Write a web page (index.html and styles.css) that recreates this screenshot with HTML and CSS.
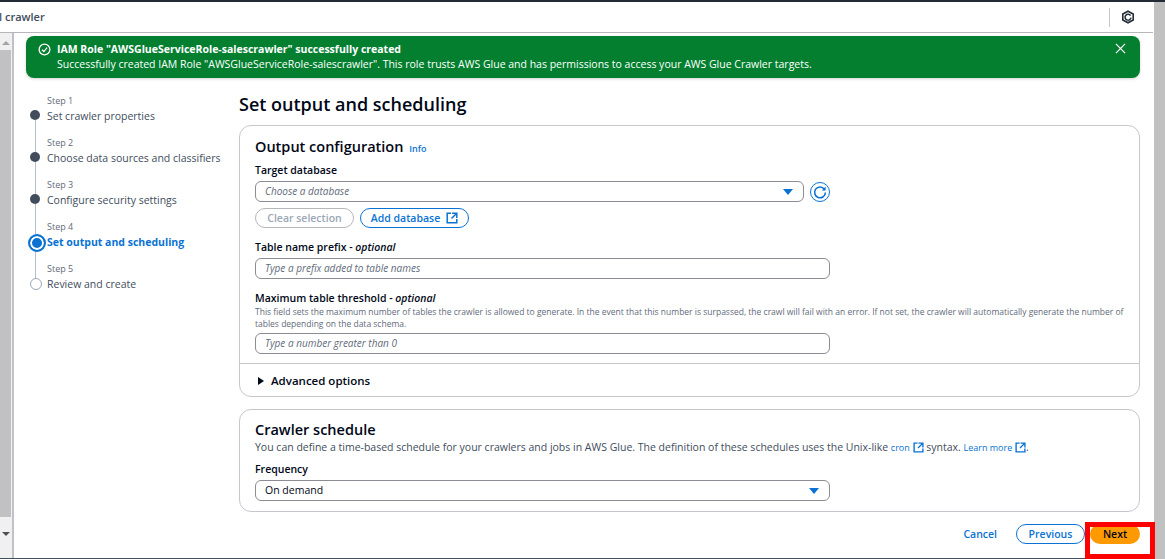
FILE: index.html
```html
<!DOCTYPE html>
<html lang="en">
<head>
<meta charset="utf-8">
<title>Add crawler</title>
<link rel="stylesheet" href="styles.css">
</head>
<body>
<div class="page">
  <header class="topbar">
    <span class="crumb">l crawler</span>
    <span class="top-right">
      <svg class="hex" viewBox="0 0 14 14" width="14" height="14"><path d="M7 1.2 12.2 4v6L7 12.8 1.8 10V4Z" fill="none" stroke="#232b37" stroke-width="1.6"/><path d="M9.6 5.6A3 3 0 1 0 10 7.6" fill="none" stroke="#232b37" stroke-width="1.5"/></svg>
    </span>
  </header>
  <div class="body-row">
    <div class="scroll-left"><span class="arrow-up"></span><span class="thumb"></span><span class="arrow-down"></span></div>
    <main class="content">
      <div class="flash">
        <svg class="flash-icon" viewBox="0 0 14 14" width="13" height="13"><circle cx="7" cy="7" r="5.8" fill="none" stroke="#fff" stroke-width="1.4"/><path d="M4.3 7.2 6.3 9.2 9.8 5" fill="none" stroke="#fff" stroke-width="1.4"/></svg>
        <div class="flash-text">
          <div class="flash-title">IAM Role "AWSGlueServiceRole-salescrawler" successfully created</div>
          <div>Successfully created IAM Role "AWSGlueServiceRole-salescrawler". This role trusts AWS Glue and has permissions to access your AWS Glue Crawler targets.</div>
        </div>
        <svg class="flash-close" viewBox="0 0 12 12" width="11" height="11"><path d="M1 1 11 11M11 1 1 11" stroke="#fff" stroke-width="1.4" fill="none"/></svg>
      </div>
      <div class="wizard">
        <nav class="steps">
          <div class="step done"><div class="step-no">Step 1</div><div class="step-name">Set crawler properties</div></div>
          <div class="step done"><div class="step-no">Step 2</div><div class="step-name">Choose data sources and classifiers</div></div>
          <div class="step done"><div class="step-no">Step 3</div><div class="step-name">Configure security settings</div></div>
          <div class="step current"><div class="step-no">Step 4</div><div class="step-name">Set output and scheduling</div></div>
          <div class="step todo"><div class="step-no">Step 5</div><div class="step-name">Review and create</div></div>
        </nav>
        <div class="form">
          <h1>Set output and scheduling</h1>
          <section class="card card-output">
            <div class="card-body">
              <h2>Output configuration <a class="info">Info</a></h2>
              <div class="label l-target">Target database</div>
              <div class="select-row">
                <div class="field select wide"><i>Choose a database</i><span class="caret"></span></div>
                <svg class="refresh" viewBox="0 0 20 20" width="20" height="20"><circle cx="10" cy="10" r="9.5" fill="none" stroke="#0972d3" stroke-width="1"/><path d="M14.4 7.2A5.4 5.4 0 1 0 15.4 10.4" fill="none" stroke="#0972d3" stroke-width="1.6"/><path d="M15.6 4.6V8.4H11.8Z" fill="#0972d3"/></svg>
              </div>
              <div class="btn-row">
                <span class="btn disabled">Clear selection</span>
                <span class="btn primary-line">Add database
                  <svg class="ext" viewBox="0 0 12 12" width="12" height="12"><path d="M5 1.2H1.2V10.8H10.8V7" fill="none" stroke="#0972d3" stroke-width="1.5"/><path d="M6 1.2H10.8V6M10.5 1.5 5.5 6.5" fill="none" stroke="#0972d3" stroke-width="1.5"/></svg>
                </span>
              </div>
              <div class="label l-prefix">Table name prefix - <i>optional</i></div>
              <div class="field"><i>Type a prefix added to table names</i></div>
              <div class="label l-max">Maximum table threshold - <i>optional</i></div>
              <p class="hint">This field sets the maximum number of tables the crawler is allowed to generate. In the event that this number is surpassed, the crawl will fail with an error. If not set, the crawler will automatically generate the number of tables depending on the data schema.</p>
              <div class="field"><i>Type a number greater than 0</i></div>
            </div>
            <div class="advanced"><span class="tri"></span>Advanced options</div>
          </section>
          <section class="card card-schedule">
            <h2>Crawler schedule</h2>
            <p class="desc">You can define a time-based schedule for your crawlers and jobs in AWS Glue. The definition of these schedules uses the Unix-like <a class="link">cron</a> <svg class="ext-small" viewBox="0 0 12 12" width="11" height="11"><path d="M5 1.2H1.2V10.8H10.8V7" fill="none" stroke="#0972d3" stroke-width="1.5"/><path d="M6 1.2H10.8V6M10.5 1.5 5.5 6.5" fill="none" stroke="#0972d3" stroke-width="1.5"/></svg> syntax. <a class="link">Learn more</a> <svg class="ext-small" viewBox="0 0 12 12" width="11" height="11"><path d="M5 1.2H1.2V10.8H10.8V7" fill="none" stroke="#0972d3" stroke-width="1.5"/><path d="M6 1.2H10.8V6M10.5 1.5 5.5 6.5" fill="none" stroke="#0972d3" stroke-width="1.5"/></svg>.</p>
            <div class="label l-freq">Frequency</div>
            <div class="field select"><span class="value">On demand</span><span class="caret"></span></div>
          </section>
          <div class="actions">
            <span class="cancel">Cancel</span>
            <span class="btn primary-line prev">Previous</span>
            <span class="btn next">Next</span>
          </div>
        </div>
      </div>
    </main>
    <div class="scroll-right"></div>
  </div>
  <div class="bottom-line"></div>
  <div class="highlight"></div>
</div>
</body>
</html>
```
FILE: styles.css
```css
* { box-sizing: border-box; }
html, body { margin: 0; padding: 0; }
body { font-family: "Open Sans", "Noto Sans", sans-serif; color: #000716; background: #fff; overflow: hidden; }
.page { position: relative; width: 1165px; height: 559px; display: flex; flex-direction: column; border-top: 2px solid #232b37; overflow: hidden; }
.topbar { height: 31px; flex: none; display: flex; align-items: center; justify-content: space-between; border-bottom: 1px solid #b6b6bb; width: 1153px; font-size: 11px; font-weight: 600; color: #414d5c; }
.crumb { margin-left: -1px; position: relative; top: -1px; }
.top-right { height: 19px; border-left: 1px solid #c6c6cd; padding-left: 11px; margin-right: 18px; display: flex; align-items: center; }
.body-row { flex: 1; display: flex; min-height: 0; }
.scroll-left { width: 14px; flex: none; background: #f0f0f0; border-right: 2px solid #c1c1c8; display: flex; flex-direction: column; align-items: center; width: 14px; padding-right: 1px; }
.arrow-up { flex: none; margin-top: 8px; border: 4px solid transparent; border-top: 0; border-bottom: 4px solid #a3a3a3; }
.thumb { width: 11px; margin-top: 5px; margin-right: 0; height: 467px; background: #c1c1c1; flex: none; }
.arrow-down { flex: none; margin-top: 15px; border: 4px solid transparent; border-bottom: 0; border-top: 4px solid #505050; }
.content { flex: 1; min-width: 0; padding: 3px 14px 0 12px; }
.scroll-right { width: 11px; flex: none; background: #c1c1c1; margin-top: -31px; }
.flash { height: 42px; background: #037f2f; color: #fff; border-radius: 8px; box-shadow: 0 1px 3px rgba(0,0,0,.18); display: flex; align-items: flex-start; padding: 6px 0 0 12px; font-size: 10.5px; line-height: 15px; position: relative; white-space: nowrap; }
.flash-icon { flex: none; margin: 1px 6px 0 0; }
.flash-title { font-weight: 700; }
.flash-close { position: absolute; right: 14px; top: 7px; }
.wizard { display: flex; margin-top: 15px; }
.steps { width: 213px; flex: none; padding: 2px 0 0 7px; }
.step { position: relative; height: 42px; padding-left: 14px; font-size: 10.5px; }
.step::before { content: ""; position: absolute; left: -3px; top: 15px; width: 10px; height: 10px; border-radius: 50%; background: #414d5c; z-index: 1; }
.step::after { content: ""; position: absolute; left: 1.5px; top: 25px; bottom: -15px; width: 1px; background: #b6bec9; }
.step:last-child::after { display: none; }
.step-no { font-size: 9px; line-height: 12px; color: #5f6b7a; }
.step-name { line-height: 18px; color: #414d5c; white-space: nowrap; }
.step.current::before { left: -5px; top: 13px; width: 14px; height: 14px; background: #0972d3; border: 2px solid #0972d3; box-shadow: inset 0 0 0 2px #fff; }
.step.current .step-name { color: #0972d3; font-weight: 700; }
.step.todo::before { background: #fff; border: 1.5px solid #9ba7b6; }
.form { flex: 1; min-width: 0; }
h1 { margin: 0 0 9px; font-size: 18px; line-height: 23px; font-weight: 600; color: #000716; position: relative; }
.form h1 { padding-top: 0; }
.card { border: 1px solid #c6c6cd; border-radius: 12px; background: #fff; }
.card-output { height: 272px; }
.card-body { padding: 11px 15px 0; height: 238px; border-bottom: 1px solid #c6c6cd; }
h2 { margin: 0; font-size: 14.5px; line-height: 20px; font-weight: 600; }
.info { font-size: 9px; font-weight: 600; color: #0972d3; margin-left: 2px; }
.label { font-size: 10.5px; font-weight: 600; line-height: 14px; }
.label i { font-weight: 600; }
.l-target { margin-top: 4px; }
.select-row { display: flex; align-items: center; gap: 6px; margin-top: 4px; }
.field { width: 575px; height: 21px; border: 1px solid #8c8c94; border-radius: 6px; padding-left: 9px; font-size: 10px; line-height: 19px; color: #5f6b7a; display: flex; align-items: center; justify-content: space-between; }
.field.wide { width: 549px; }
.value { color: #000716; font-size: 10.5px; }
.caret { border: 5px solid transparent; border-bottom: 0; border-top: 6px solid #0972d3; margin-right: 10px; }
.refresh { flex: none; }
.btn-row { display: flex; gap: 6px; margin-top: 6px; }
.btn { height: 20px; border-radius: 10px; font-size: 10.5px; font-weight: 600; display: inline-flex; align-items: center; justify-content: center; }
.btn.disabled { width: 99px; border: 1px solid #b6b6bb; color: #9ba7b6; }
.btn.primary-line { border: 1px solid #0972d3; color: #0972d3; gap: 6px; }
.btn-row .primary-line { width: 109px; }
.l-prefix { margin-top: 12px; margin-bottom: 4px; }
.l-max { margin-top: 12px; }
.hint { margin: 1px 0 4px; font-size: 8.5px; line-height: 11.5px; color: #5f6b7a; }
.advanced { height: 33px; padding-left: 18px; display: flex; align-items: center; font-size: 11.5px; font-weight: 600; }
.tri { border: 4px solid transparent; border-right: 0; border-left: 6px solid #000716; margin-right: 7px; }
.card-schedule { margin-top: 12px; height: 103px; padding: 10px 15px 0; }
.desc { margin: 0; font-size: 10.5px; line-height: 14px; color: #414d5c; white-space: nowrap; margin-top: 0; }
.link { font-size: 9px; color: #0972d3; }
.ext-small { vertical-align: -2px; }
.l-freq { margin-top: 7px; margin-bottom: 4px; }
.actions { display: flex; justify-content: flex-end; align-items: center; margin-top: 12px; gap: 5px; }
.cancel { font-size: 10.5px; font-weight: 600; color: #0972d3; margin-right: 14px; }
.prev { width: 69px; }
.next { width: 50px; background: #ff9900; color: #000716; }
.bottom-line { position: absolute; left: 0; right: 11px; bottom: 0; height: 1px; background: #414d5c; }
.highlight { position: absolute; left: 1085px; top: 520px; width: 70px; height: 37px; border: 5px solid #f00; }
```
